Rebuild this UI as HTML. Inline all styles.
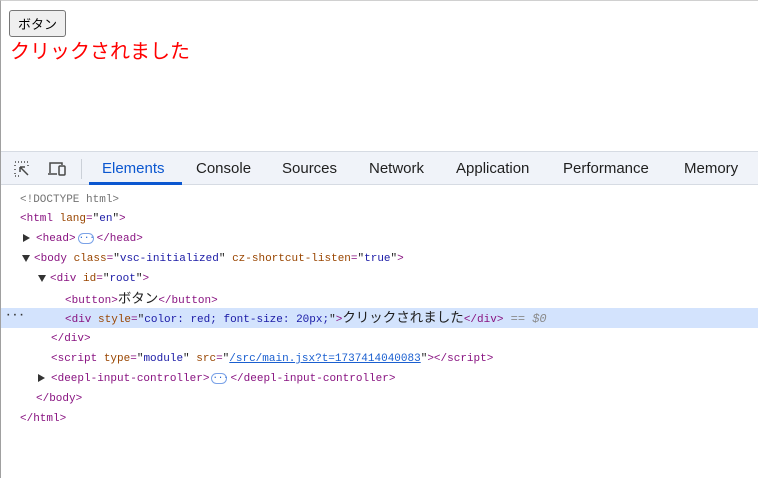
<!DOCTYPE html>
<html><head><style>
body{margin:0;width:758px;height:478px;overflow:hidden;background:#fff;position:relative;font-family:"Liberation Sans","Noto Sans CJK JP",sans-serif}
.page{position:absolute;left:0;top:0;width:758px;height:151px;border-left:1px solid #a0a0a0;border-top:1px solid #d0d0d0;box-sizing:border-box}
button{position:absolute;left:8px;top:9px;height:27px;width:57px;font:13px "Liberation Sans","Noto Sans CJK JP",sans-serif;border:1px solid #767676;border-radius:3px;background:#efefef;padding:0}
.msg{position:absolute;left:9px;top:39px;color:red;font-size:20px;line-height:24px}
.dt{position:absolute;left:0;top:151px;width:758px;height:327px;border-left:1px solid #a0a0a0;box-sizing:border-box}
.tb{position:absolute;left:0;top:0;width:758px;height:34px;background:#f0f3f9;border-bottom:1px solid #d6dbe3;border-top:1px solid #d6dbe3;box-sizing:border-box}
.tab{position:absolute;top:8px;font-size:15px;color:#1f1f1f}
.line{position:absolute;left:0;width:758px;height:20px;font:11px/20px "Liberation Mono","Noto Sans CJK JP",monospace;white-space:pre;color:#1f1f1f}
.t{color:#881280}.a{color:#994500}.v{color:#1a1aa6}.c{color:#737373}
.j{font-family:"Liberation Sans","Noto Sans CJK JP",sans-serif;font-size:13.5px}
.tri{display:inline-block;width:0;height:0;vertical-align:middle}
.r{border-left:7px solid #333;border-top:4.5px solid transparent;border-bottom:4.5px solid transparent;margin-right:6px}
.d{border-top:7px solid #333;border-left:4.5px solid transparent;border-right:4.5px solid transparent;margin-right:4px}
.el{display:inline-block;width:16px;height:11px;border:1px solid #7aa2e8;border-radius:6px;font-size:9px;line-height:8px;text-align:center;color:#1a5fd0;vertical-align:middle;box-sizing:border-box;margin:0 3px 0 2px}
</style></head><body>
<div class="page"><button>ボタン</button><div class="msg">クリックされました</div></div>
<div class="dt">
<div class="tb">
<svg style="position:absolute;left:12px;top:8px" width="20" height="18" viewBox="0 0 20 18" fill="none" stroke="#474747" stroke-width="1.5"><path d="M2 2h1M5 2h1M8 2h1M11 2h1M14 2h1M2 5v1M2 9v1M2 13v1M2 16h1M5 16h1M15 5v1" stroke-dasharray="1.5 1.5"/><path d="M7 7l8 8M7 7h5M7 7v5"/></svg>
<svg style="position:absolute;left:45px;top:8px" width="22" height="18" viewBox="0 0 22 18" fill="none" stroke="#474747" stroke-width="1.5"><path d="M4 13V3h12v2"/><path d="M2 14h9"/><rect x="13" y="6" width="6" height="9" rx="1"/></svg>
<div style="position:absolute;left:80px;top:7px;width:1px;height:20px;background:#cbd0d8"></div>
<div class="tab" style="left:101px;color:#0b57d0">Elements</div>
<div style="position:absolute;left:88px;top:30px;width:93px;height:3px;background:#0b57d0"></div>
<div class="tab" style="left:195px">Console</div>
<div class="tab" style="left:281px">Sources</div>
<div class="tab" style="left:368px">Network</div>
<div class="tab" style="left:455px">Application</div>
<div class="tab" style="left:562px">Performance</div>
<div class="tab" style="left:683px">Memory</div>
</div>
<div class="line" style="top:39px;padding-left:19px" ><span class="c">&lt;!DOCTYPE html&gt;</span></div>
<div class="line" style="top:58px;padding-left:19px"><span class="t">&lt;html </span><span class="a">lang</span><span class="t">=</span>"<span class="v">en</span>"<span class="t">&gt;</span></div>
<div class="line" style="top:78px;padding-left:22px"><span class="tri r"></span><span class="t">&lt;head&gt;</span><span class="el">···</span><span class="t">&lt;/head&gt;</span></div>
<div class="line" style="top:98px;padding-left:21px"><span class="tri d"></span><span class="t">&lt;body </span><span class="a">class</span><span class="t">=</span>"<span class="v">vsc-initialized</span>" <span class="a">cz-shortcut-listen</span><span class="t">=</span>"<span class="v">true</span>"<span class="t">&gt;</span></div>
<div class="line" style="top:118px;padding-left:37px"><span class="tri d"></span><span class="t">&lt;div </span><span class="a">id</span><span class="t">=</span>"<span class="v">root</span>"<span class="t">&gt;</span></div>
<div class="line" style="top:138px;padding-left:64px"><span class="t">&lt;button&gt;</span><span class="j">ボタン</span><span class="t">&lt;/button&gt;</span></div>
<div class="line" style="top:157px;padding-left:64px;background:#d3e3fd"><span style="position:absolute;left:4px;top:-2px;font-weight:bold;color:#333">···</span><span class="t">&lt;div </span><span class="a">style</span><span class="t">=</span>"<span class="v">color: red; font-size: 20px;</span>"<span class="t">&gt;</span><span class="j">クリックされました</span><span class="t">&lt;/div&gt;</span><span style="color:#8a8a8a;font-style:italic;font-size:12px"> == $0</span></div>
<div class="line" style="top:178px;padding-left:50px"><span class="t">&lt;/div&gt;</span></div>
<div class="line" style="top:198px;padding-left:50px"><span class="t">&lt;script </span><span class="a">type</span><span class="t">=</span>"<span class="v">module</span>" <span class="a">src</span><span class="t">=</span>"<span style="color:#1a5fd0;text-decoration:underline">/src/main.jsx?t=1737414040083</span>"<span class="t">&gt;&lt;/script&gt;</span></div>
<div class="line" style="top:218px;padding-left:37px"><span class="tri r"></span><span class="t">&lt;deepl-input-controller&gt;</span><span class="el">···</span><span class="t">&lt;/deepl-input-controller&gt;</span></div>
<div class="line" style="top:238px;padding-left:35px"><span class="t">&lt;/body&gt;</span></div>
<div class="line" style="top:258px;padding-left:19px"><span class="t">&lt;/html&gt;</span></div>
</div>
</body></html>
